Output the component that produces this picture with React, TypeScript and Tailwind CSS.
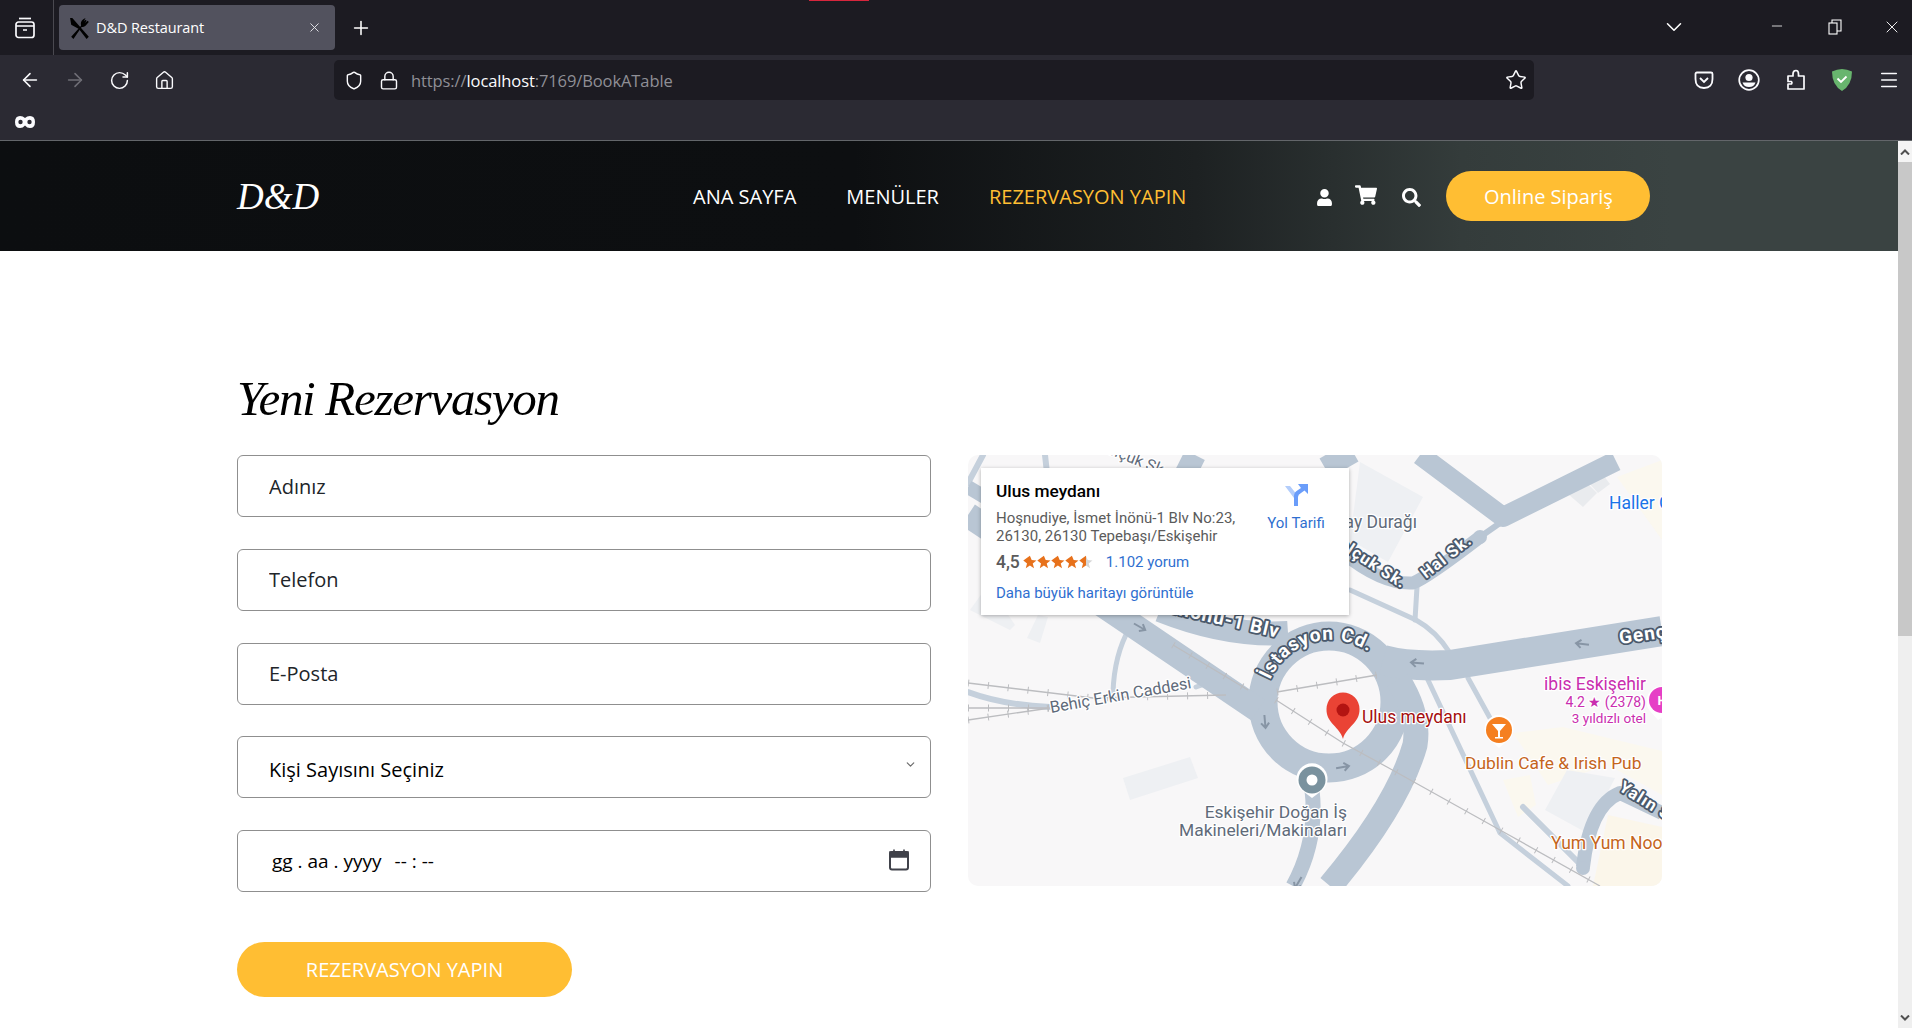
import { ArrowLeft, ArrowRight, ChevronDown, House, Lock, Menu, Minus, Plus, RotateCw, Shield, Star, X } from "lucide-react";
import { FaSearch, FaShoppingCart, FaUser } from "react-icons/fa";

const road = "#b9c6d4";
const thin = "#c5d0dc";
const building = "#eef0f3";
const labelGray = "#5f6b7a";
const orange = "#c5651c";

function Arrow({ x, y, angle }: { x: number; y: number; angle: number }) {
  return (
    <path
      d="M-7 0H6M1-4L6 0L1 4"
      transform={`translate(${x} ${y}) rotate(${angle})`}
      fill="none"
      stroke="#8795a5"
      strokeWidth="2"
    />
  );
}

function Rail({ d }: { d: string }) {
  return (
    <>
      <path d={d} fill="none" stroke="#bcbdc0" strokeWidth="1.3" />
      <path d={d} fill="none" stroke="#bcbdc0" strokeWidth="7" strokeDasharray="1 19" />
    </>
  );
}

function MapDrawing() {
  const halo = { stroke: "#fff", strokeWidth: 2.5, paintOrder: "stroke" as const, strokeLinejoin: "round" as const };
  const roadLabel = { fill: "#fff", fontWeight: 700, fontSize: 19, letterSpacing: 1, stroke: "#4a596c", strokeWidth: 3.6, paintOrder: "stroke" as const, strokeLinejoin: "round" as const };
  return (
    <svg viewBox="0 0 694 431" className="h-full w-full font-['Roboto',sans-serif]">
      <rect width="694" height="431" fill="#f8f7f8" />

      {/* pale areas */}
      <path d="M649 22L694 5V85Z" fill="#fbf8ef" />
      <path d="M545 278L595 272L694 296V340L640 310L580 330Z" fill="#fbf8ef" />
      <path d="M535 325L562 320L568 350L550 362Z" fill="#fbf8ef" />
      <path d="M625 431L640 360L694 372V431Z" fill="#fbf6ea" />

      {/* buildings */}
      <path d="M392 7L455 42L420 107L382 85Z" fill={building} />
      <path d="M155 323L222 302L230 323L162 345Z" fill={building} />
      <path d="M59 183L70 160L80 162L72 188Z" fill={building} />
      <path d="M2 155L20 130L47 170L42 175Z" fill={building} />
      <path d="M599 315L647 323L619 378L577 355Z" fill={building} />
      <path d="M592 32L609 18L629 38L615 52Z" fill="#e9ebee" />
      <path d="M620 27L632 16L642 29L630 38Z" fill="#e9ebee" />

      {/* thin roads */}
      <g fill="none" stroke={thin} strokeWidth="5" strokeLinecap="round">
        <path d="M382 135L448 165Q468 176 482 198" />
        <path d="M449 132L447 165" />
        <path d="M460 225L532 378L600 431" />
        <path d="M500 223L522 263" />
        <path d="M555 352L615 412" strokeWidth="6" />
        <path d="M0 237Q35 250 82 252" strokeWidth="6" />
        <path d="M145 238Q146 200 162 172" />
        <path d="M228 232L258 222" />
        <path d="M15 0L0 28" strokeWidth="6" />
        <path d="M77 0L79 18" strokeWidth="6" />
      </g>

      {/* main roads */}
      <g fill="none" stroke={road} strokeLinecap="butt" strokeLinejoin="round">
        <circle cx="361" cy="247" r="66" strokeWidth="29" />
        <path d="M0 60L135 150L290 255" strokeWidth="25" />
        <path d="M0 32L30 50" strokeWidth="14" />
        <path d="M192 155Q260 182 320 178" strokeWidth="24" />
        <path d="M415 205Q440 212 482 210L694 176" strokeWidth="30" />
        <path d="M430 225Q452 260 447 290Q430 350 362 431" strokeWidth="25" />
        <path d="M344 335Q350 385 325 431" strokeWidth="15" />
        <path d="M452 0L535 62L648 6" strokeWidth="20" />
        <path d="M357 13L385 -3" strokeWidth="22" />
        <path d="M227 0L218 18" strokeWidth="22" />
        <path d="M375 98Q415 130 445 128Q460 122 512 82" strokeWidth="13" />
        <path d="M512 82L532 68" strokeWidth="6" />
        <path d="M615 412Q622 350 652 338L694 358" strokeWidth="14" />
      </g>
      <circle cx="615" cy="413" r="7" fill={road} />
      <circle cx="512" cy="82" r="7" fill={road} />

      {/* railway */}
      <Rail d="M0 228L125 243L258 240" />
      <Rail d="M0 253L82 253" />
      <Rail d="M0 265L82 253" />
      <Rail d="M309 237L409 220" />
      <Rail d="M308 245L375 288L419 312L532 375L632 431" />
      <Rail d="M205 190L280 235" />

      {/* one way arrows */}
      <Arrow x={172} y={172} angle={30} />
      <Arrow x={297} y={267} angle={85} />
      <Arrow x={375} y={312} angle={-10} />
      <Arrow x={449} y={208} angle={185} />
      <Arrow x={614} y={189} angle={187} />
      <Arrow x={330} y={428} angle={120} />

      {/* road names */}
      <text transform="translate(163 8) rotate(22)" textAnchor="middle" fontSize={16} fill={labelGray} {...halo}>Selçuk Sk.</text>
      <text transform="translate(434 134) rotate(33)" textAnchor="end" {...roadLabel} fontSize={16.5}>Selçuk Sk.</text>
      <text transform="translate(458 124) rotate(-38)" {...roadLabel} fontSize={16.5}>Hal Sk.</text>
      <text transform="translate(310 183) rotate(13)" textAnchor="end" {...roadLabel}>İsmet İnönü-1 Blv</text>
      <path id="istasyon" d="M302 225A66 66 0 0 1 420 218" fill="none" />
      <text {...roadLabel}>
        <textPath href="#istasyon">İstasyon Cd.</textPath>
      </text>
      <text transform="translate(652 189) rotate(-8)" {...roadLabel}>Genç Osman</text>
      <text transform="translate(650 335) rotate(32)" {...roadLabel} fontSize={16.5}>Yalın Sk.</text>

      {/* place labels */}
      <text x="449" y="73" textAnchor="end" fontSize="17.5" fill={labelGray} {...halo}>Tramvay Durağı</text>
      <text transform="translate(83 258) rotate(-10)" fontSize="16.3" fill={labelGray} {...halo}>Behiç Erkin Caddesi</text>
      <text x="641" y="54" fontSize="17.5" fill="#1a73e8" {...halo}>Haller Gençlik Merkezi</text>
      <text x="678" y="235" textAnchor="end" fontSize="17.5" fill="#c92eaf" {...halo}>ibis Eskişehir</text>
      <text x="678" y="252" textAnchor="end" fontSize="14" fill="#c92eaf" {...halo}>4.2 ★ (2378)</text>
      <text x="678" y="268" textAnchor="end" fontSize="13.5" fill="#c92eaf" {...halo}>3 yıldızlı otel</text>
      <text x="394" y="268" fontSize="17.5" fill="#a50e0e" {...halo}>Ulus meydanı</text>
      <text x="497" y="314" fontSize="17.4" fill={orange} {...halo}>Dublin Cafe &amp; Irish Pub</text>
      <text x="583" y="394" fontSize="17.5" fill={orange} {...halo}>Yum Yum Noodles</text>
      <text x="379" y="363" textAnchor="end" fontSize="17.4" fill={labelGray} {...halo}>Eskişehir Doğan İş</text>
      <text x="379" y="381" textAnchor="end" fontSize="17.4" fill={labelGray} {...halo}>Makineleri/Makinaları</text>

      {/* pins */}
      <path d="M375 284C372 272 358 268 358.5 254A16.5 16.5 0 0 1 391.5 254C392 268 378 272 375 284Z" fill="#ea4335" />
      <circle cx="375" cy="255" r="6.5" fill="#b31412" />

      <path d="M531 293L524 287A14.5 14.5 0 1 1 538 287Z" fill="#fff" />
      <circle cx="531" cy="275" r="13" fill="#f57f20" />
      <path d="M524 269H538L532 276V282H535V283.5H527V282H530V276Z" fill="#fff" />

      <path d="M344 343L336 337A15.5 15.5 0 1 1 352 337Z" fill="#fff" />
      <circle cx="344" cy="325" r="13.5" fill="#7a929e" />
      <circle cx="344" cy="325" r="5.5" fill="#fff" />

      <path d="M690 265L682 256A15 15 0 1 1 705 256Z" fill="#fff" />
      <circle cx="694" cy="245" r="13" fill="#e63fc6" />
      <text x="694" y="250" textAnchor="middle" fontSize="13" fontWeight="700" fill="#fff">H</text>
    </svg>
  );
}

function StarsRow() {
  const pts = "6.5,0.5 8.2,4.7 12.7,5 9.2,7.9 10.4,12.3 6.5,9.9 2.6,12.3 3.8,7.9 0.3,5";
  return (
    <svg viewBox="0 0 66 13" className="h-[14px] w-[70px]">
      <defs>
        <linearGradient id="half">
          <stop offset="50%" stopColor="#e7711b" />
          <stop offset="50%" stopColor="#d6d6d6" />
        </linearGradient>
      </defs>
      {[0, 1, 2, 3].map((i) => (
        <polygon key={i} points={pts} fill="#e7711b" transform={`translate(${i * 13.2} 0)`} />
      ))}
      <polygon points={pts} fill="url(#half)" transform="translate(52.8 0)" />
    </svg>
  );
}

function MapCard() {
  return (
    <div className="absolute left-[13px] top-[13px] flex h-[147px] w-[368px] bg-white pl-[15px] pt-[13px] font-['Roboto',sans-serif] shadow-[0_1px_4px_rgba(0,0,0,0.3)]">
      <div className="w-[270px]">
        <div className="text-[17.3px] font-medium leading-[20px] text-black">Ulus meydanı</div>
        <div className="mt-[8px] whitespace-nowrap text-[15px] leading-[18px] text-[#5b5b5b]">
          Hoşnudiye, İsmet İnönü-1 Blv No:23,
          <br />
          26130, 26130 Tepebaşı/Eskişehir
        </div>
        <div className="mt-[6px] flex h-[22px] items-center">
          <span className="text-[17.500px] font-medium text-[#5b5b5b]">4,5</span>
          <span className="ml-[3px]"><StarsRow /></span>
          <span className="ml-[13px] text-[15px] text-[#2f6fd0]">1.102 yorum</span>
        </div>
        <div className="mt-[10px] whitespace-nowrap text-[15px] leading-[20px] text-[#2f6fd0]">Daha büyük haritayı görüntüle</div>
      </div>
      <div className="flex w-[60px] flex-col items-center">
        <svg viewBox="0 0 24 24" className="mt-[2px] h-[24px] w-[24px]">
          <path d="M1 3H6L14 13V23H10V15Z" fill="#b3cdfb" />
          <path d="M10 23V13Q10 9 14 7L17 5L14 1H24V11L20.5 7.5L17 10Q14 11.500 14 14V23Z" fill="#6a9dfa" />
        </svg>
        <div className="mt-[5px] whitespace-nowrap text-[15px] text-[#2f6fd0]">Yol Tarifi</div>
      </div>
    </div>
  );
}

function BrowserTabBar() {
  return (
    <div className="flex h-[55px] items-center bg-[#1c1b22] text-white font-['Open_Sans',sans-serif]">
      <div className="relative flex h-full w-[54px] items-center justify-center border-r border-[#4a4950]">
        <svg viewBox="0 0 20 22" className="mr-[3px] h-[22px] w-[20px]" fill="none" stroke="#fbfbfe" strokeWidth="1.7">
          <path d="M4 1.500H16" />
          <rect x="1" y="5" width="18" height="15.500" rx="2.500" />
          <path d="M1 9H19M8 13H12" />
        </svg>
        <div className="absolute left-[809px] top-0 h-[1px] w-[60px] bg-[#d7263d]" />
      </div>
      <div className="ml-[5px] flex h-[45px] w-[276px] items-center rounded-[4px] bg-[#52525e] pl-[10px]">
        <svg viewBox="0 0 20 20" className="h-[22px] w-[22px]">
          <path d="M1 1L3 1L18 18L16 20L9 11L2 7Z" fill="#000" />
          <path d="M2 18L11 8Q10 4 13 2L15 1L13.500 4L15 2.500L16 3.500L14.500 5.500L17 3.500L18 4.500L15 8Q13 9.500 11.500 9L4 20Z" fill="#000" />
        </svg>
        <span className="ml-[5px] text-[14.500px] tracking-[-0.1px]">D&amp;D Restaurant</span>
        <X className="ml-auto mr-[13px] h-[15px] w-[15px] text-[#e5e5ea]" strokeWidth={1.5} />
      </div>
      <div className="flex w-[52px] justify-center">
        <Plus className="h-[22px] w-[22px]" strokeWidth={1.7} />
      </div>
      <div className="ml-auto flex items-center">
        <ChevronDown className="mr-[54px] h-[26px] w-[40px] -translate-y-[1px]" strokeWidth={1.4} />
        <div className="flex w-[57px] justify-center">
          <Minus className="h-[16px] w-[16px] -translate-y-[2px]" strokeWidth={1.2} />
        </div>
        <div className="flex w-[57px] justify-center">
          <svg viewBox="0 0 14 16" className="ml-[2px] h-[16px] w-[14px] -translate-y-[1px]" fill="none" stroke="#fff" strokeWidth="1.100">
            <rect x="1" y="4" width="8" height="11" />
            <path d="M4 4V1H13V12H9" />
          </svg>
        </div>
        <div className="flex w-[50px] justify-center pl-[10px]">
          <X className="h-[20px] w-[20px] -translate-y-[1px]" strokeWidth={1.1} />
        </div>
      </div>
    </div>
  );
}

function BrowserToolbar() {
  return (
    <div className="h-[86px] border-b border-[#63666a] bg-[#2b2a33] text-[#fbfbfe] font-['Open_Sans',sans-serif]">
      <div className="flex pt-[5px]">
        <div className="flex h-[40px] items-center pl-[7px]">
          <div className="flex w-[45px] justify-center"><ArrowLeft className="h-[22px] w-[22px]" strokeWidth={1.7} /></div>
          <div className="flex w-[45px] justify-center"><ArrowRight className="h-[22px] w-[22px] text-[#6f6e76]" strokeWidth={1.7} /></div>
          <div className="flex w-[45px] justify-center"><RotateCw className="h-[21px] w-[21px]" strokeWidth={1.7} /></div>
          <div className="flex w-[45px] justify-center"><House className="h-[21px] w-[21px]" strokeWidth={1.6} /></div>
        </div>
        <div className="ml-[147px] flex h-[40px] w-[1203px] items-center rounded-[5px] bg-[#1c1b22] pl-[10px]">
          <Shield className="h-[21px] w-[20px]" strokeWidth={1.7} />
          <Lock className="ml-[15px] h-[21px] w-[20px]" strokeWidth={1.7} />
          <span className="ml-[12px] translate-y-[1px] text-[16.500px] tracking-[-0.1px] text-[#8f8f96]">
            https://<span className="text-[#fbfbfe]">localhost</span>:7169/BookATable
          </span>
          <Star className="ml-auto mr-[7px] h-[22px] w-[22px]" strokeWidth={1.6} />
        </div>
        <div className="ml-[146px] flex h-[40px] items-center">
          <div className="flex w-[46.500px] justify-center pl-[2px]">
            <svg viewBox="0 0 20 20" className="h-[20px] w-[20px]" fill="none" stroke="#fbfbfe" strokeWidth="1.8">
              <path d="M3 2.500H17Q18.500 2.500 18.500 4V9Q18.500 18 10 18Q1.500 18 1.500 9V4Q1.500 2.500 3 2.500Z" />
              <path d="M6 8L10 12L14 8" />
            </svg>
          </div>
          <div className="flex w-[46.500px] justify-center">
            <svg viewBox="0 0 22 22" className="h-[22px] w-[22px]" fill="none">
              <circle cx="11" cy="11" r="9.800" stroke="#fbfbfe" strokeWidth="1.700" />
              <circle cx="11" cy="8.500" r="3.600" fill="#fbfbfe" />
              <path d="M4.500 13.500H17.500Q16 18 11 18Q6 18 4.500 13.500Z" fill="#fbfbfe" />
            </svg>
          </div>
          <div className="flex w-[46.500px] justify-center">
            <svg viewBox="0 0 20 22" className="h-[22px] w-[20px]" fill="none" stroke="#fbfbfe" strokeWidth="1.700" strokeLinejoin="round">
              <path d="M2 7H7V5Q7 1.500 10 1.500Q12.500 1.500 12.500 5V7H18V20H2V15H5.500Q6.500 13.500 5.500 12.500H2Z" />
            </svg>
          </div>
          <div className="flex w-[46.500px] justify-center">
            <svg viewBox="0 0 20 22" className="h-[22px] w-[20px]">
              <path d="M10 0Q15 0 20 2.500Q20 16 10 22Q0 16 0 2.500Q5 0 10 0Z" fill="#68b56e" />
              <path d="M5.500 9.500L9 13L14.500 7.500" fill="none" stroke="#fff" strokeWidth="1.800" />
            </svg>
          </div>
          <div className="flex w-[46.500px] justify-center">
            <Menu className="h-[22px] w-[22px]" strokeWidth={1.6} />
          </div>
        </div>
      </div>
      <div className="pl-[15px] pt-[15px]">
        <svg viewBox="0 0 20 14" className="h-[14px] w-[20px]">
          <path d="M5 1Q8 1 10 3Q12 1 15 1Q20 1 20 7Q20 13 15 13Q12 13 10 10.500Q8 13 5 13Q0 13 0 7Q0 1 5 1Z" fill="#fbfbfe" />
          <circle cx="5.500" cy="7" r="2.200" fill="#2b2a33" />
          <circle cx="14.500" cy="7" r="2.200" fill="#2b2a33" />
        </svg>
      </div>
    </div>
  );
}

function SiteHeader() {
  return (
    <header className="flex h-[110px] items-center bg-[linear-gradient(90deg,#0c0e10_0%,#0d0f11_45%,#1d2122_63%,#343c3b_77%,#3a4342_88%,#3a4342_100%)] pl-[237px] font-['Open_Sans',sans-serif] text-white">
      <div className="w-[456px] font-['Liberation_Serif',serif] text-[37px] italic leading-none">D&amp;D</div>
      <nav className="flex translate-y-[1px] gap-[50px] text-[20px]">
        <a>ANA SAYFA</a>
        <a>MENÜLER</a>
        <a className="text-[#ffbe33]">REZERVASYON YAPIN</a>
      </nav>
      <div className="ml-[131px] flex items-center">
        <FaUser className="h-[17px] w-[15px] translate-y-[1px]" />
        <FaShoppingCart className="ml-[23px] h-[20px] w-[22px] -translate-y-[1px]" />
        <FaSearch className="ml-[25px] h-[19px] w-[19px] translate-y-[1px]" />
      </div>
      <a className="ml-[25px] flex h-[50px] w-[204px] items-center justify-center rounded-full bg-[#ffbe33] text-[20px]">
        <span className="translate-y-[1px]">Online Sipariş</span>
      </a>
    </header>
  );
}

const fieldClass =
  "h-[62px] w-full rounded-[6px] border border-[#8f8f8f] bg-white pl-[31px] font-['Open_Sans',sans-serif] text-[20px] text-[#212529] placeholder:text-[#212529] outline-none";

function BookingForm() {
  return (
    <form className="flex w-[694px] flex-col gap-[31.750px]">
      <input className={fieldClass} placeholder="Adınız" />
      <input className={fieldClass} placeholder="Telefon" />
      <input className={fieldClass} placeholder="E-Posta" />
      <div className={`relative flex items-center ${fieldClass} text-black`}>
        <span className="translate-y-[3px]">Kişi Sayısını Seçiniz</span>
        <ChevronDown className="absolute right-[13px] top-[21px] h-[13px] w-[13px] text-[#6b6b6b]" strokeWidth={2.2} />
      </div>
      <div className={`relative flex items-center ${fieldClass} text-black`}>
        <span className="ml-[3px] whitespace-pre text-[19px]">gg . aa . yyyy</span>
        <span className="ml-[13px] whitespace-pre text-[19px]">-- : --</span>
        <svg viewBox="0 0 20 22" className="absolute right-[21px] top-[18px] h-[22px] w-[20px]" fill="none">
          <rect x="1" y="3" width="18" height="17.500" rx="2" stroke="#40424a" strokeWidth="2" />
          <path d="M1 3H19V8H1Z M5 0.500V4 M15 0.500V4" fill="#40424a" stroke="#40424a" strokeWidth="1.600" />
        </svg>
      </div>
      <button type="button" className="mt-[18px] h-[55px] w-[335px] rounded-full bg-[#ffbe33] pt-[2px] font-['Open_Sans',sans-serif] text-[20px] text-white">
        REZERVASYON YAPIN
      </button>
    </form>
  );
}

export default function App() {
  return (
    <div className="h-[1028px] w-full overflow-hidden bg-white">
      <BrowserTabBar />
      <BrowserToolbar />
      <div className="flex">
        <div className="min-w-0 flex-1">
          <SiteHeader />
          <main className="pl-[237px] pt-[118px]">
            <h1 className="h-[86px] -translate-y-[3px] font-['Liberation_Serif',serif] text-[49px] italic leading-[66px] tracking-[-1.300px] text-black">Yeni Rezervasyon</h1>
            <div className="flex items-start gap-[37px]">
              <BookingForm />
              <div className="relative h-[431px] w-[694px] overflow-hidden rounded-[10px]">
                <MapDrawing />
                <MapCard />
              </div>
            </div>
          </main>
        </div>
        <div className="flex h-[887px] w-[14px] flex-col bg-[#efefef]">
          <div className="flex h-[21px] items-center justify-center bg-[#f4f4f4]">
            <svg viewBox="0 0 10 6" className="h-[6px] w-[10px]" fill="none" stroke="#505050" strokeWidth="2"><path d="M1 5.500L5 1.500L9 5.500" /></svg>
          </div>
          <div className="h-[474px] bg-[#c8c8c8]" />
          <div className="mt-auto flex h-[21px] items-center justify-center">
            <svg viewBox="0 0 10 6" className="h-[6px] w-[10px]" fill="none" stroke="#505050" strokeWidth="2"><path d="M1 0.500L5 4.500L9 0.500" /></svg>
          </div>
        </div>
      </div>
    </div>
  );
}
